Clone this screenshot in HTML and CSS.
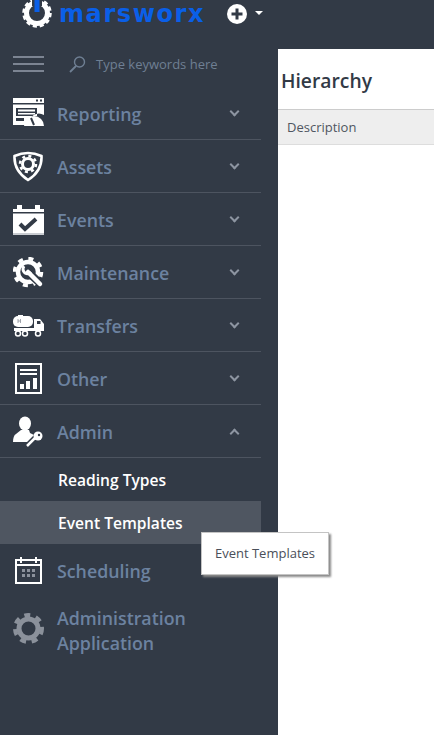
FILE: index.html
```html
<!DOCTYPE html>
<html lang="en">
<head>
    <meta charset="UTF-8">
    <title>Hierarchy</title>
    <link rel="stylesheet" href="styles.css">
</head>
<body>
    <header class="topbar">
        <svg class="logo-gear" width="30" height="28" viewBox="0 0 30 28">
            <circle cx="15" cy="13" r="10.5" fill="none" stroke="#fff" stroke-width="5"/>
            <circle cx="15" cy="13" r="13" fill="none" stroke="#fff" stroke-width="3.5" stroke-dasharray="4 2.8"/>
            <rect x="10" y="0" width="10" height="6" fill="#323a46"/>
            <rect x="12.5" y="0" width="5" height="12" fill="#0a5fe8"/>
        </svg>
        <span class="wordmark">marsworx</span>
        <svg class="add-icon" width="20" height="20" viewBox="0 0 20 20">
            <circle cx="10" cy="10" r="10" fill="#fff"/>
            <path d="M10 4.500v11M4.500 10h11" stroke="#323a46" stroke-width="3"/>
        </svg>
        <span class="add-caret"></span>
    </header>

    <div class="layout">
        <aside class="sidebar">
            <nav class="nav">
                <div class="search-row">
                    <div class="burger"><span></span><span></span><span></span></div>
                    <svg class="search-icon" width="17" height="17" viewBox="0 0 17 17" fill="none" stroke="#6f7f93" stroke-width="1.4">
                        <circle cx="10.5" cy="6" r="5"/>
                        <path d="M7 10l-6 6" stroke-width="1.8"/>
                    </svg>
                    <span class="search-text">Type keywords here</span>
                </div>

                <div class="nav-item">
                    <svg class="nav-icon" width="31" height="31" viewBox="0 0 31 31">
                        <path fill="#fff" fill-rule="evenodd" d="M0 0h31v5H0zM0 6.500h31V17a10 10 0 0 0-15 10H0zM3 10v8h21v-8zM3 20v3h8v-3z"/>
                        <rect x="5" y="11.500" width="17" height="2" fill="#fff"/>
                        <rect x="5" y="15" width="17" height="1.500" fill="#fff"/>
                        <rect x="23" y="1.500" width="2" height="2" fill="#323a46"/>
                        <rect x="27" y="1.500" width="2" height="2" fill="#323a46"/>
                        <path fill="#fff" d="M11 28a10 10 0 0 1 20 0z"/>
                        <path d="M21 27l-3-7" stroke="#323a46" stroke-width="2"/>
                    </svg>
                    <span class="nav-label">Reporting</span>
                    <span class="chevron"></span>
                </div>

                <div class="nav-item">
                    <svg class="nav-icon" width="31" height="31" viewBox="0 0 31 31">
                        <path fill="none" stroke="#fff" stroke-width="2.600" d="M15 2c4 0 9 1 13.500 3 .5 10-4 18-13.500 24C6 23 1 15 1.500 5 6 3 11 2 15 2z"/>
                        <circle cx="15" cy="13" r="5.500" fill="none" stroke="#fff" stroke-width="3"/>
                        <circle cx="15" cy="13" r="8" fill="none" stroke="#fff" stroke-width="2.500" stroke-dasharray="3 3.300"/>
                    </svg>
                    <span class="nav-label">Assets</span>
                    <span class="chevron"></span>
                </div>

                <div class="nav-item">
                    <svg class="nav-icon" width="31" height="31" viewBox="0 0 31 31">
                        <path fill="#fff" d="M0 5h4V1h5v4h13V1h5v4h4v3H0zM0 9.500h31V31H0z"/>
                        <path fill="none" stroke="#323a46" stroke-width="4" d="M7 20l5 5 11-10"/>
                        <rect x="0" y="29" width="31" height="2" fill="#c9ccd1"/>
                    </svg>
                    <span class="nav-label">Events</span>
                    <span class="chevron"></span>
                </div>

                <div class="nav-item">
                    <svg class="nav-icon" width="31" height="31" viewBox="0 0 31 31">
                        <circle cx="15" cy="15" r="10" fill="none" stroke="#fff" stroke-width="4.500"/>
                        <circle cx="15" cy="15" r="13.500" fill="none" stroke="#fff" stroke-width="3.500" stroke-dasharray="5 5.600"/>
                        <path fill="none" stroke="#323a46" stroke-width="8" d="M16 16l14 13"/>
                        <path fill="none" stroke="#fff" stroke-width="4.500" stroke-linecap="round" d="M15 15l12 12"/>
                        <path fill="none" stroke="#fff" stroke-width="3" d="M11 9a5 5 0 0 0 1 7 5 5 0 0 0 6-1"/>
                    </svg>
                    <span class="nav-label">Maintenance</span>
                    <span class="chevron"></span>
                </div>

                <div class="nav-item">
                    <svg class="nav-icon" width="31" height="31" viewBox="0 0 31 31">
                        <rect x="0" y="6" width="20" height="11" rx="5" fill="#fff"/>
                        <rect x="5" y="5" width="5" height="2" fill="#fff"/>
                        <path fill="none" stroke="#8b919b" stroke-width="0.800" d="M5 9v4M7.500 9v4M5 11h2.500"/>
                        <path fill="#fff" d="M21 9h6l4 5v6H21z"/>
                        <rect x="24" y="11" width="3.500" height="3" fill="#323a46"/>
                        <rect x="1" y="18" width="30" height="3" fill="#fff"/>
                        <circle cx="5" cy="23.500" r="2.500" fill="#323a46" stroke="#fff" stroke-width="1.500"/>
                        <circle cx="12" cy="23.500" r="2.500" fill="#323a46" stroke="#fff" stroke-width="1.500"/>
                        <circle cx="25" cy="23.500" r="2.500" fill="#323a46" stroke="#fff" stroke-width="1.500"/>
                    </svg>
                    <span class="nav-label">Transfers</span>
                    <span class="chevron"></span>
                </div>

                <div class="nav-item">
                    <svg class="nav-icon" width="31" height="31" viewBox="0 0 31 31">
                        <rect x="3" y="1" width="25" height="29" fill="none" stroke="#fff" stroke-width="2"/>
                        <rect x="7" y="6" width="17" height="2" fill="#fff"/>
                        <rect x="7" y="10" width="17" height="2" fill="#fff"/>
                        <path fill="#fff" d="M7 21h4v5H7zM13 18h4v8h-4zM20 15h4v11h-4z"/>
                    </svg>
                    <span class="nav-label">Other</span>
                    <span class="chevron"></span>
                </div>

                <div class="nav-item">
                    <svg class="nav-icon" width="31" height="31" viewBox="0 0 31 31">
                        <ellipse cx="12" cy="7.500" rx="6" ry="7" fill="#fff"/>
                        <path fill="#fff" d="M8 14h8l1 3 4 2-7 7H0c0-4 1-7 3-8z"/>
                        <path fill="none" stroke="#fff" stroke-width="2.500" d="M14 30l9-9"/>
                        <circle cx="25" cy="20" r="4.500" fill="#fff"/>
                        <circle cx="26" cy="19" r="1.200" fill="#323a46"/>
                    </svg>
                    <span class="nav-label">Admin</span>
                    <span class="chevron chevron-up"></span>
                </div>

                <div class="sub-item">Reading Types</div>
                <div class="sub-item sub-active">Event Templates</div>

                <div class="nav-item nav-plain">
                    <svg class="nav-icon" width="31" height="31" viewBox="0 0 31 31">
                        <path fill="none" stroke="#fff" stroke-width="2" d="M3 5h25v23H3zM3 10h25"/>
                        <path stroke="#fff" stroke-width="2" d="M8 2v6M23 2v6"/>
                        <path fill="#8b919b" d="M9 14h3v3H9zM14 14h3v3h-3zM19 14h3v3h-3zM9 19h3v3H9zM14 19h3v3h-3zM19 19h3v3h-3z"/>
                    </svg>
                    <span class="nav-label">Scheduling</span>
                </div>

                <div class="nav-item nav-plain nav-tall">
                    <svg class="nav-icon" width="31" height="31" viewBox="0 0 31 31">
                        <circle cx="15.500" cy="15.500" r="9.500" fill="none" stroke="#8b919b" stroke-width="5"/>
                        <circle cx="15.500" cy="15.500" r="13.500" fill="none" stroke="#8b919b" stroke-width="4" stroke-dasharray="6 5.800"/>
                    </svg>
                    <span class="nav-label">Administration Application</span>
                </div>
            </nav>
        </aside>

        <main class="content">
            <h1 class="page-title">Hierarchy</h1>
            <div class="table-head">Description</div>
        </main>
    </div>

    <div class="tooltip">Event Templates</div>
</body>
</html>
```

FILE: styles.css
```css
html, body {
    height: 100%;
}

body {
    margin: 0;
    overflow: hidden;
    background: #323a46;
    font-family: "Open Sans", sans-serif;
    display: flex;
    flex-direction: column;
}

.topbar {
    height: 49px;
    flex: none;
    display: flex;
    align-items: flex-start;
    padding-left: 22px;
    box-sizing: border-box;
}

.wordmark {
    font-family: "DejaVu Sans", sans-serif;
    font-weight: 700;
    font-size: 24px;
    line-height: 28px;
    letter-spacing: 1.600px;
    color: #0a5fe8;
    margin-left: 7px;
    width: 148px;
    white-space: nowrap;
}

.add-icon {
    margin: 4px 0 0 20px;
}

.add-caret {
    margin: 11px 0 0 8px;
    border: 4px solid transparent;
    border-top-color: #fff;
    border-bottom: 0;
}

.layout {
    flex: 1;
    display: flex;
}

.sidebar {
    width: 278px;
    flex: none;
}

.nav {
    width: 261px;
}

.search-row {
    height: 38px;
    display: flex;
    align-items: center;
    padding-left: 13px;
    padding-bottom: 8px;
    box-sizing: border-box;
}

.burger {
    width: 31px;
    display: flex;
    flex-direction: column;
    gap: 5px;
}

.burger span {
    height: 2px;
    background: #7c8492;
}

.search-icon {
    margin-left: 25px;
}

.search-text {
    margin-left: 10px;
    font-size: 13px;
    color: #6f7f93;
}

.nav-item {
    height: 53px;
    display: flex;
    align-items: center;
    padding-left: 13px;
    padding-right: 23px;
    border-bottom: 1px solid #4d5460;
    box-sizing: border-box;
}

.nav-plain {
    border-bottom: 0;
}

.nav-tall {
    height: 58px;
    margin-top: 4px;
}

.nav-tall .nav-icon {
    margin-top: -4px;
}

.nav-icon {
    flex: none;
}

.nav-label {
    flex: 1;
    margin: 2px 0 0 13px;
    font-size: 17.800px;
    font-weight: 600;
    line-height: 25px;
    color: #6c82a0;
}

.chevron {
    width: 5px;
    height: 5px;
    border-right: 2px solid #8d95a1;
    border-bottom: 2px solid #8d95a1;
    transform: rotate(45deg);
    margin-bottom: 4px;
}

.chevron-up {
    transform: rotate(225deg);
    margin-bottom: -4px;
}

.sub-item {
    height: 43px;
    line-height: 45px;
    padding-left: 58px;
    font-size: 15.600px;
    font-weight: 600;
    color: #fff;
}

.sub-active {
    background: #4f5661;
}

.content {
    flex: 1;
    background: #fff;
}

.page-title {
    margin: 0;
    height: 60px;
    padding: 18px 0 0 3px;
    box-sizing: border-box;
    font-size: 19.300px;
    font-weight: 600;
    line-height: 28px;
    color: #323a46;
}

.table-head {
    height: 36px;
    line-height: 34px;
    padding-left: 9px;
    box-sizing: border-box;
    background: #eeeeee;
    border-top: 1px solid #cccccc;
    border-bottom: 1px solid #dddddd;
    font-size: 13px;
    color: #4f5661;
}

.tooltip {
    position: absolute;
    left: 201px;
    top: 532px;
    width: 128px;
    height: 43px;
    box-sizing: border-box;
    background: #fff;
    border: 1px solid #c4c4c4;
    box-shadow: 2px 2px 2px #8a8a8a;
    font-size: 13px;
    line-height: 41px;
    text-align: center;
    color: #4a4f5a;
}
```
